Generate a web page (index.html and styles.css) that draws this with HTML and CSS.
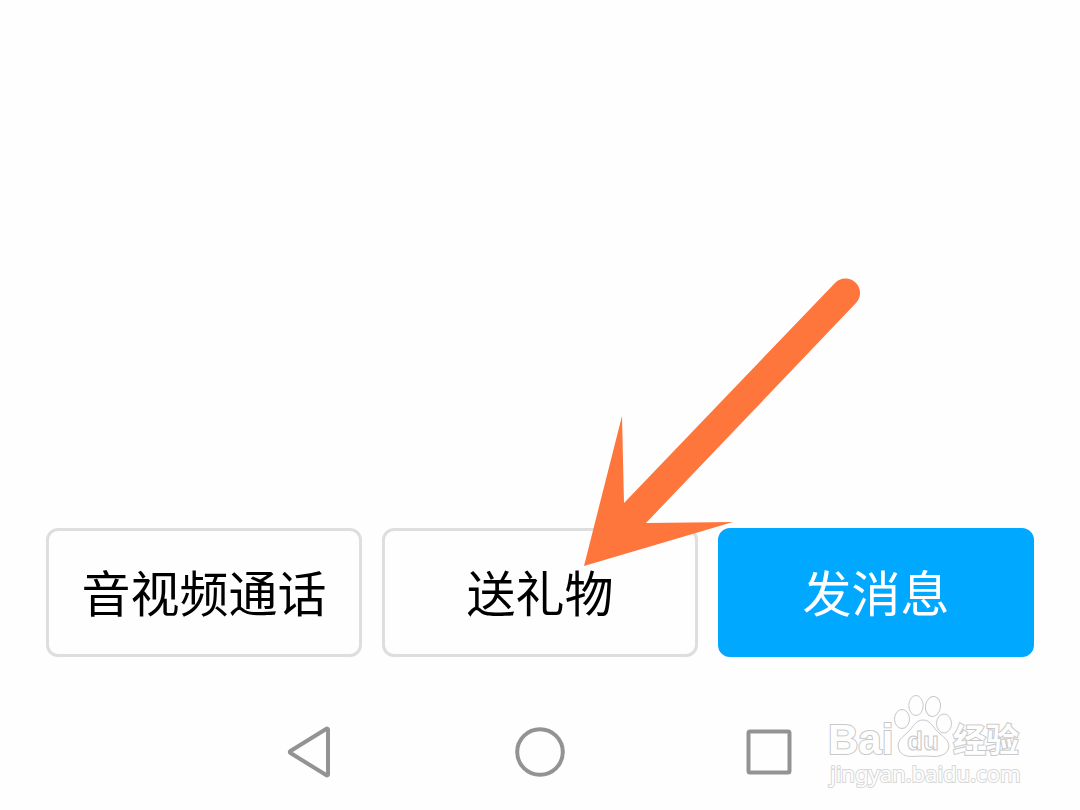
FILE: index.html
```html
<!DOCTYPE html>
<html lang="zh-CN">
<head>
<meta charset="utf-8">
<meta name="viewport" content="width=device-width, initial-scale=1">
<title>音视频通话</title>
<link rel="stylesheet" href="styles.css">
</head>
<body>
<main class="screen">
  <div class="actions">
    <button class="action" type="button">音视频通话</button>
    <div class="gift">
      <button class="action" type="button">送礼物</button>
      <svg class="arrow" width="280" height="290" viewBox="0 0 280 290" aria-hidden="true">
        <path d="M0 289 38 139 40 226 251 6A14 14 0 0 1 272 26L62 246 149 245Z"/>
      </svg>
    </div>
    <button class="action primary" type="button">发消息</button>
  </div>
  <nav class="navbar">
    <button class="nav-key" type="button" aria-label="返回">
      <svg width="54" height="54" viewBox="0 0 54 54"><path d="M44 4.500V49.500a1 1 0 0 1-1.500.8L6.500 28q-1.500-1 0-2L42.500 3.700a1 1 0 0 1 1.500.8Z"/></svg>
    </button>
    <button class="nav-key" type="button" aria-label="主页">
      <svg width="54" height="54" viewBox="0 0 54 54"><circle cx="27" cy="27" r="22.800"/></svg>
    </button>
    <button class="nav-key" type="button" aria-label="最近任务">
      <svg width="54" height="54" viewBox="0 0 54 54"><rect x="6.500" y="6.500" width="41" height="41" rx="1.500"/></svg>
    </button>
  </nav>
  <svg class="watermark" width="210" height="100" viewBox="0 0 210 100" role="img" aria-label="Baidu 经验">
    <text class="wm-bai" x="7" y="63">Bai</text>
    <ellipse cx="81" cy="28" rx="7.500" ry="9.500"/>
    <ellipse cx="95" cy="14.500" rx="7.200" ry="10"/>
    <ellipse cx="112" cy="15.500" rx="7.500" ry="10" transform="rotate(8 112 15.500)"/>
    <ellipse cx="123" cy="32.500" rx="7.500" ry="9.500"/>
    <path d="M102 29C94 29 92 37 86 42S75 51 78 59C82 68 94 65 102 65S122 68 127 59C130 51 124 47 118 42S110 29 102 29Z"/>
    <text class="wm-du" x="86" y="59">du</text>
    <text class="wm-cjk" x="132" y="61">经验</text>
    <text class="wm-url" x="9" y="91">jingyan.baidu.com</text>
  </svg>
</main>
</body>
</html>
```
FILE: styles.css
```css
* {
  box-sizing: border-box;
}

body {
  margin: 0;
  background: #fefefe;
  font-family: "Noto Sans CJK SC", sans-serif;
}

.screen {
  position: relative;
  min-height: 100vh;
  display: flex;
  flex-direction: column;
  justify-content: flex-end;
  overflow: hidden;
}

.actions {
  display: grid;
  grid-template-columns: repeat(3, 1fr);
  gap: 20px;
  padding: 0 46px;
}

.gift {
  position: relative;
}

.action {
  width: 100%;
  padding: 27px 0 30px;
  border: 3px solid #dedede;
  border-radius: 12px;
  background: #fefefe;
  color: #000;
  font: inherit;
  font-size: 49px;
  line-height: 66px;
  white-space: nowrap;
}

.primary {
  border-color: #00a9ff;
  background: #00a9ff;
  color: #fff;
}

.arrow {
  position: absolute;
  left: calc(50% + 44px);
  bottom: 90px;
  z-index: 1;
  fill: #ff763c;
  pointer-events: none;
}

.navbar {
  display: flex;
  justify-content: center;
  gap: 175px;
  padding: 68px 0 31px;
}

.nav-key {
  display: block;
  padding: 0;
  border: 0;
  background: none;
}

.nav-key svg {
  display: block;
  fill: none;
  stroke: #939393;
  stroke-width: 4px;
}

.watermark {
  position: absolute;
  right: 49px;
  bottom: 19px;
  fill: #fefefe;
  stroke: #c8c8c8;
  stroke-width: 1px;
}

.watermark text {
  stroke-width: 2px;
  paint-order: stroke;
}

.wm-bai {
  font: bold 42px "Liberation Sans", sans-serif;
}

.watermark .wm-du {
  font: bold 26px "Liberation Sans", sans-serif;
  stroke-width: 1px;
  paint-order: normal;
}

.wm-cjk {
  font: bold 33px "Noto Sans CJK SC", sans-serif;
}

.watermark .wm-url {
  font: 22px "Noto Sans", sans-serif;
  stroke: #d8d8d8;
}
```
